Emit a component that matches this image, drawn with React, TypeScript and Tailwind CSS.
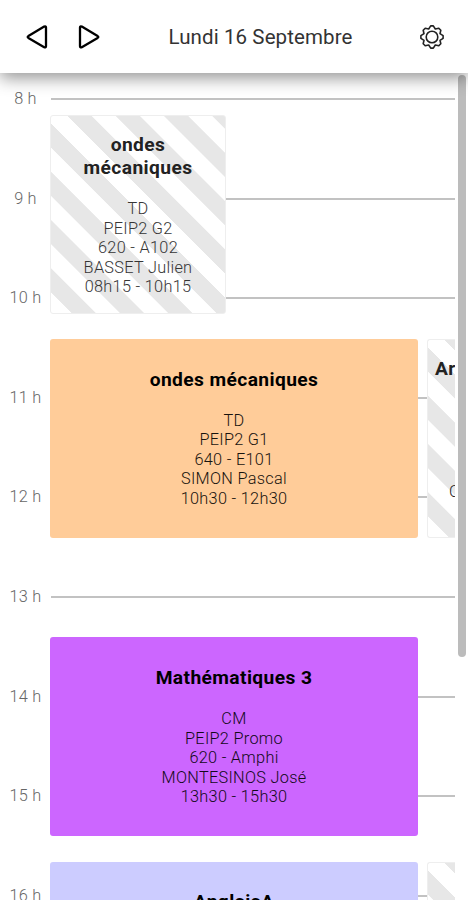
type Course = {
  title: string
  type: string
  group: string
  room: string
  teacher: string
  time: string
  color: string
}

const HOURS = [8, 9, 10, 11, 12, 13, 14, 15, 16]

const STRIPES =
  'bg-[repeating-linear-gradient(45deg,#ffffff_0px,#ffffff_14.3px,#e7e7e7_14.9px,#e7e7e7_31.4px,#ffffff_32px,#ffffff_34.1px)]'

function CourseCard({ course, className = '' }: { course: Course; className?: string }) {
  return (
    <article
      className={`flex h-[199px] flex-col items-center justify-center rounded-[3px] text-center ${course.color} ${className}`}
    >
      <h2 className="text-[19.2px] leading-[23.5px] font-bold tracking-[0.4px]">{course.title}</h2>
      <div className="mt-[19.5px] text-[16.3px] leading-[19.5px] font-light tracking-[0.3px] opacity-90">
        <p>{course.type}</p>
        <p>{course.group}</p>
        <p>{course.room}</p>
        <p>{course.teacher}</p>
        <p>{course.time}</p>
      </div>
    </article>
  )
}

function Header() {
  return (
    <header className="z-10 flex h-[73px] items-center bg-white shadow-[0_5px_16px_rgba(0,0,0,0.42)]">
      <div className="flex w-[126px] gap-[30px] pl-[26px]">
        <button aria-label="Jour précédent">
          <svg width="22" height="26" viewBox="0 0 22 26" fill="none" stroke="#000" strokeWidth="2.3" strokeLinejoin="round">
            <path d="M18.2 2.6 L2.4 12.1 Q1 13 2.4 13.9 L18.2 23.2 Q20 24 20 22.2 L20 3.6 Q20 1.8 18.2 2.6 Z" />
          </svg>
        </button>
        <button aria-label="Jour suivant">
          <svg width="22" height="26" viewBox="0 0 22 26" fill="none" stroke="#000" strokeWidth="2.3" strokeLinejoin="round">
            <path d="M3.8 2.6 L19.6 12.1 Q21 13 19.6 13.9 L3.8 23.2 Q2 24 2 22.2 L2 3.6 Q2 1.8 3.8 2.6 Z" />
          </svg>
        </button>
      </div>
      <h1 className="flex-1 pt-px pl-4 text-center text-[20.5px] tracking-[0.1px] text-[#333]">Lundi 16 Septembre</h1>
      <button aria-label="Paramètres" className="mr-[23px] ml-10">
        <svg width="26" height="26" viewBox="0 0 26 26" fill="none" stroke="#222" strokeWidth="1.6" strokeLinejoin="round">
          <path d="M11.7 1.9 L14.3 1.9 L16.3 5 L19.8 4.2 L21.8 6.2 L21 9.7 L24.1 11.7 L24.1 14.3 L21 16.3 L21.8 19.8 L19.8 21.8 L16.3 21 L14.3 24.1 L11.7 24.1 L9.7 21 L6.2 21.8 L4.2 19.8 L5 16.3 L1.9 14.3 L1.9 11.7 L5 9.7 L4.2 6.2 L6.2 4.2 L9.7 5 Z" />
          <circle cx="13" cy="13" r="5.8" />
        </svg>
      </button>
    </header>
  )
}

function App() {
  const courses: Course[] = [
    { title: 'ondes mécaniques', type: 'TD', group: 'PEIP2 G2', room: '620 - A102', teacher: 'BASSET Julien', time: '08h15 - 10h15', color: STRIPES },
    { title: 'ondes mécaniques', type: 'TD', group: 'PEIP2 G1', room: '640 - E101', teacher: 'SIMON Pascal', time: '10h30 - 12h30', color: 'bg-[#ffcc99]' },
    { title: 'Mathématiques 3', type: 'CM', group: 'PEIP2 Promo', room: '620 - Amphi', teacher: 'MONTESINOS José', time: '13h30 - 15h30', color: 'bg-[#cc66ff]' },
  ]

  return (
    <div className="flex h-[900px] w-[468px] flex-col overflow-hidden bg-white font-[Roboto,sans-serif]">
      <Header />
      <div className="flex min-h-0 flex-1">
        <main className="grid w-[455px] grid-cols-1 overflow-hidden">
          <div className="col-start-1 row-start-1 flex flex-col gap-[79.6px] pt-4">
            {HOURS.map((hour) => (
              <div key={hour} className="flex h-5 shrink-0 items-center">
                <span className="w-[51px] text-center text-[16.3px] leading-5 font-light tracking-[0.2px] text-[#666]">{hour} h</span>
                <hr className="flex-1 border-t-2 border-[#c2c2c2]" />
              </div>
            ))}
          </div>
          <div className="z-[1] col-start-1 row-start-1 flex flex-col pt-[42px] pl-[50px]">
            <CourseCard course={courses[0]} className="w-[176px] border border-[#eee] px-6 text-[#222]" />
            <div className="mt-[24.5px] flex gap-[9px]">
              <CourseCard course={courses[1]} className="w-[368px]" />
              <div className={`h-[199px] w-7 overflow-hidden rounded-l-[3px] border border-r-0 border-[#eee] pt-[17px] text-[#222] ${STRIPES}`}>
                <h2 className="pl-[7px] text-[19.2px] leading-[23.5px] font-bold tracking-[0.4px]">Ar</h2>
                <p className="pt-[101.5px] pl-[21px] text-[16.3px] leading-[19.5px] font-light">C</p>
              </div>
            </div>
            <CourseCard course={courses[2]} className="mt-[99.5px] w-[368px]" />
            <div className="mt-[25.5px] flex h-[38px] gap-[9px]">
              <div className="w-[368px] rounded-t-[3px] bg-[#ccccff] pt-[28.5px] text-center">
                <h2 className="text-[19.2px] leading-[23.5px] font-bold tracking-[0.4px]">AnglaisA</h2>
              </div>
              <div className="w-7 overflow-hidden">
                <div className={`h-[199px] rounded-tl-[3px] border border-r-0 border-[#eee] ${STRIPES}`} />
              </div>
            </div>
          </div>
        </main>
        <div className="mt-[2px] ml-[3px] h-[582px] w-2 rounded-full bg-[#bcbcbc]" />
      </div>
    </div>
  )
}

export default App
